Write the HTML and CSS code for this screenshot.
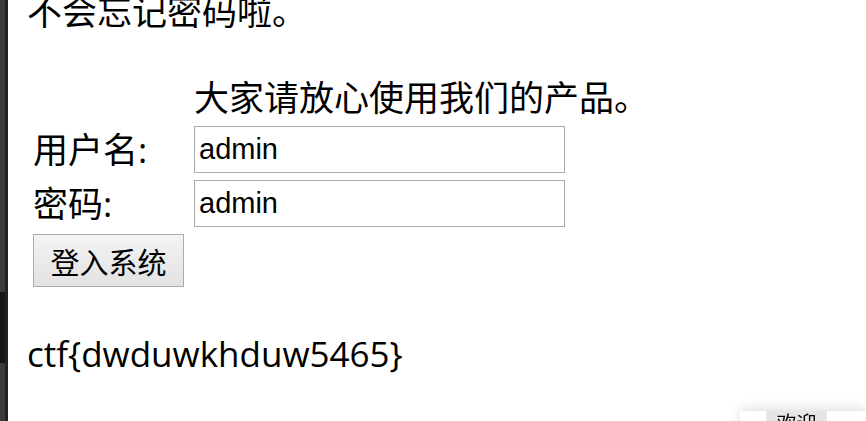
FILE: index.html
```html
<!DOCTYPE html>
<html lang="zh-CN">
<head>
<meta charset="utf-8">
<title>登录</title>
<link rel="stylesheet" href="styles.css">
</head>
<body>
<div class="page">
  <div class="edge">
    <div class="edge-outer"><div class="edge-dark"></div></div>
    <div class="edge-inner"></div>
  </div>
  <main class="main">
    <p class="intro">不会忘记密码啦。</p>
    <form class="login">
      <span class="cell"></span>
      <span class="notice">大家请放心使用我们的产品。</span>
      <label class="label" for="user">用户名:</label>
      <input class="field" id="user" type="text" value="admin">
      <label class="label" for="pass">密码:</label>
      <input class="field" id="pass" type="text" value="admin">
      <button class="submit" type="button">登入系统</button>
    </form>
    <p class="flag">ctf{dwduwkhduw5465}</p>
  </main>
</div>
<div class="popup"><span class="popup-btn">欢迎</span></div>
</body>
</html>
```

FILE: styles.css
```css
html, body {
  margin: 0;
  padding: 0;
  background: #ffffff;
  overflow: hidden;
}

body {
  font-family: "Open Sans", "Noto Sans CJK SC", sans-serif;
  font-size: 35px;
  color: #000000;
}

.page {
  display: flex;
  height: 421px;
}

.edge {
  display: flex;
  width: 8px;
  flex: none;
}

.edge-outer {
  width: 5px;
  background: #3b3b3b;
  display: flex;
  flex-direction: column;
}

.edge-dark {
  margin-top: 292px;
  height: 71px;
  background: #161616;
}

.edge-inner {
  width: 3px;
  background: #1f2328;
}

.main {
  padding-left: 19px;
  flex: 1;
}

.intro {
  margin: -9px 0 0 0;
  line-height: 42px;
  height: 42px;
}

.login {
  display: grid;
  grid-template-columns: 161px 371px;
  grid-template-rows: 42px 47px 47px 53px;
  row-gap: 7px;
  margin: 44px 0 0 6px;
  align-items: center;
}

.notice {
  line-height: 42px;
  white-space: nowrap;
}

.label {
  line-height: 42px;
}

.field {
  box-sizing: border-box;
  width: 371px;
  height: 47px;
  margin: 0;
  padding: 0 4px;
  border: 1px solid #a9a9a9;
  font-family: "Liberation Sans", Arial, sans-serif;
  font-size: 29px;
  color: #000000;
  background: #ffffff;
}

.submit {
  box-sizing: border-box;
  width: 151px;
  height: 53px;
  margin: 0;
  padding: 0;
  border: 1px solid #adadad;
  border-radius: 0;
  background: linear-gradient(#f4f4f4, #e2e2e2);
  font-family: "Noto Sans CJK SC", sans-serif;
  font-size: 29px;
  color: #000000;
}

.flag {
  margin: 46px 0 0 0;
  line-height: 42px;
}

.popup {
  position: fixed;
  left: 740px;
  top: 411px;
  width: 126px;
  height: 40px;
  background: #ffffff;
  box-shadow: 0 -3px 10px rgba(0, 0, 0, 0.12);
  display: flex;
}

.popup-btn {
  margin-left: 26px;
  width: 61px;
  height: 30px;
  background: #e6e6e6;
  font-family: "Noto Sans CJK SC", sans-serif;
  font-size: 20px;
  line-height: 1;
  padding-top: 2px;
  text-align: center;
  color: #000000;
}
```
